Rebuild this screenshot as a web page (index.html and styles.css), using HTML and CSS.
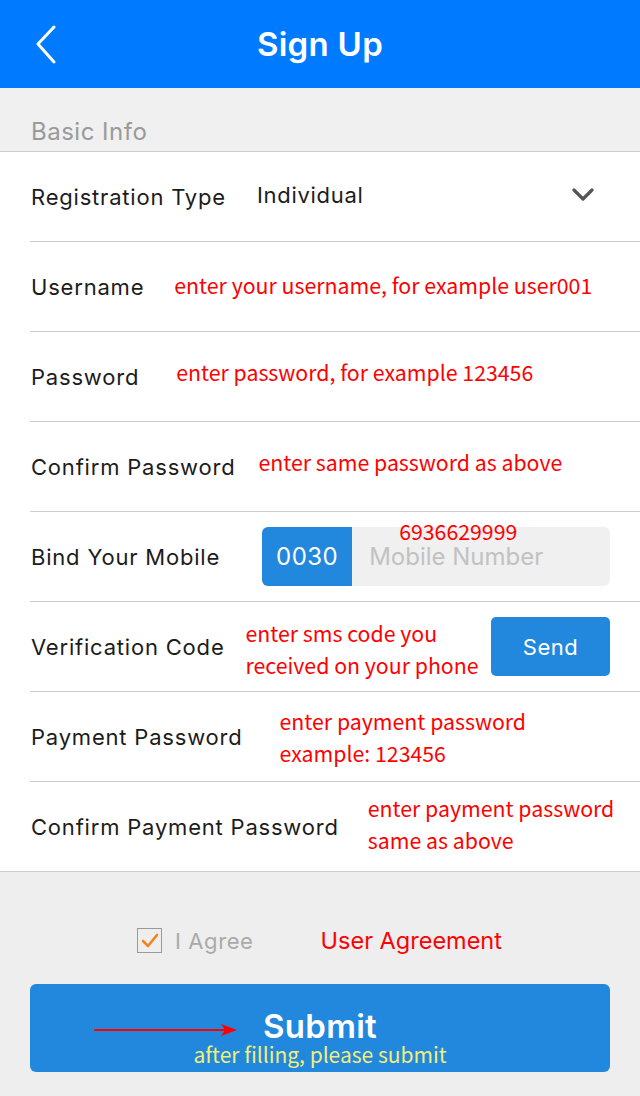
FILE: index.html
```html
<!DOCTYPE html>
<html>
<head>
<meta charset="utf-8">
<link rel="stylesheet" href="styles.css">
</head>
<body>
<header class="topbar">
  <svg class="back" width="30" height="40" viewBox="0 0 30 40"><polyline points="19,2 3,19 19,37" fill="none" stroke="#fff" stroke-width="3" stroke-linecap="round" stroke-linejoin="round"/></svg>
  <h1 class="title">Sign Up</h1>
</header>
<div class="section-title">Basic Info</div>
<div class="form">
  <div class="row">
    <span class="label">Registration Type</span>
    <span class="select">Individual</span>
    <svg class="caret" width="22" height="14" viewBox="0 0 22 14"><polyline points="2,2 11,11 20,2" fill="none" stroke="#555" stroke-width="3.2" stroke-linecap="round" stroke-linejoin="round"/></svg>
  </div>
  <div class="row">
    <span class="label">Username</span>
    <span class="note n-user">enter your username, for example user001</span>
  </div>
  <div class="row">
    <span class="label">Password</span>
    <span class="note n-pass">enter password, for example 123456</span>
  </div>
  <div class="row">
    <span class="label">Confirm Password</span>
    <span class="note n-conf">enter same password as above</span>
  </div>
  <div class="row">
    <span class="label">Bind Your Mobile</span>
    <div class="phone">
      <span class="code">0030</span>
      <span class="placeholder">Mobile Number</span>
      <span class="note phone-note">6936629999</span>
    </div>
  </div>
  <div class="row">
    <span class="label">Verification Code</span>
    <span class="note n-ver">enter sms code you<br>received on your phone</span>
    <button class="send">Send</button>
  </div>
  <div class="row">
    <span class="label">Payment Password</span>
    <span class="note n-pay">enter payment password<br>example: 123456</span>
  </div>
  <div class="row last">
    <span class="label">Confirm Payment Password</span>
    <span class="note n-cpay">enter payment password<br>same as above</span>
  </div>
</div>
<div class="footer">
  <div class="agree">
    <span class="check"><svg width="18" height="16" viewBox="0 0 18 16"><polyline points="2,8 7,13 16,2" fill="none" stroke="#f5821f" stroke-width="2.6" stroke-linecap="round" stroke-linejoin="round"/></svg></span>
    <span class="agree-text">I Agree</span>
    <span class="agreement">User Agreement</span>
  </div>
  <div class="submit">
    <svg class="arrow" width="146" height="14" viewBox="0 0 146 14"><line x1="1" y1="7" x2="132" y2="7" stroke="#f00" stroke-width="2"/><polygon points="128,1 144,7 128,13 132,7" fill="#f00"/></svg>
    <span class="submit-text">Submit</span>
    <span class="submit-note">after filling, please submit</span>
  </div>
</div>
</body>
</html>
```
FILE: styles.css
```css
* { box-sizing: border-box; }
html, body { margin: 0; padding: 0; }
body {
  width: 640px;
  height: 1096px;
  background: #eeeeee;
  font-family: Inter, Roboto, "Liberation Sans", sans-serif;
  overflow: hidden;
}
.topbar {
  position: relative;
  height: 88px;
  background: #007aff;
  display: flex;
  align-items: center;
  justify-content: center;
}
.back {
  position: absolute;
  left: 35px;
  top: 25px;
}
.title {
  margin: 0;
  color: #fff;
  font-size: 33px;
  font-weight: 600;
  letter-spacing: 0.3px;
}
.section-title {
  height: 64px;
  background: #f0f0f0;
  color: #9a9a9a;
  font-size: 24px;
  letter-spacing: 0.5px;
  padding-left: 31px;
  padding-top: 28px;
  line-height: 32px;
  border-bottom: 1px solid #cccccc;
}
.form {
  background: #fff;
  border-bottom: 1px solid #cccccc;
}
.row {
  height: 90px;
  margin-left: 30px;
  padding-right: 30px;
  border-bottom: 1px solid #cccccc;
  display: flex;
  align-items: center;
}
.row.last { border-bottom: none; height: 89px; }
.label {
  font-size: 22px;
  letter-spacing: 0.8px;
  color: #1c1c1c;
  padding-left: 1px;
  white-space: nowrap;
}
.select {
  margin-left: 31px;
  font-size: 22px;
  letter-spacing: 0.7px;
  color: #1c1c1c;
  margin-top: -4px;
  flex: 1;
}
.caret { margin-top: -4px; margin-right: 16px; }
.note {
  font-family: "Noto Sans CJK SC", "Noto Sans", sans-serif;
  color: #ff0000;
  font-size: 21.3px;
  line-height: 32px;
  white-space: nowrap;
}
.n-user { margin-left: 30px; margin-top: -3px; }
.n-pass { margin-left: 37px; margin-top: -9px; }
.n-conf { margin-left: 23px; margin-top: -10px; }
.n-ver { margin-left: 21px; margin-top: 4px; flex: 1; }
.n-pay { margin-left: 37px; }
.n-cpay { margin-left: 29px; margin-top: -6px; }
.phone {
  position: relative;
  margin-left: 42px;
  flex: 1;
  height: 59px;
  border-radius: 6px;
  background: #f0f0f0;
  display: flex;
  align-items: center;
}
.code {
  width: 90px;
  height: 59px;
  background: #2288dd;
  border-radius: 6px 0 0 6px;
  color: #fff;
  font-size: 24px;
  letter-spacing: 0.5px;
  display: flex;
  align-items: center;
  justify-content: center;
}
.placeholder {
  margin-left: 17px;
  font-size: 24px;
  color: #c2c2c2;
}
.phone-note {
  position: absolute;
  left: 137px;
  top: -12px;
}
.send {
  width: 119px;
  height: 59px;
  border: none;
  border-radius: 5px;
  background: #2288dd;
  color: #fff;
  font-family: Inter, Roboto, "Liberation Sans", sans-serif;
  font-size: 22px;
  letter-spacing: 0.5px;
  padding: 0;
}
.footer {
  padding: 56px 30px 0 30px;
}
.agree {
  display: flex;
  align-items: center;
  height: 25px;
  padding-left: 107px;
}
.check {
  width: 25px;
  height: 25px;
  border: 1px solid #999;
  display: flex;
  align-items: center;
  justify-content: center;
}
.agree-text {
  margin-left: 13px;
  color: #aaaaaa;
  font-size: 22px;
  letter-spacing: 0.6px;
}
.agreement {
  margin-left: 67px;
  color: #ff0000;
  font-size: 23.5px;
  letter-spacing: 0;
}
.submit {
  position: relative;
  margin-top: 31px;
  height: 88px;
  border-radius: 6px;
  background: #2288dd;
  display: flex;
  flex-direction: column;
  align-items: center;
  padding-top: 24px;
}
.arrow {
  position: absolute;
  left: 63px;
  top: 39px;
}
.submit-text {
  color: #fff;
  font-size: 33px;
  font-weight: 600;
  letter-spacing: 0.3px;
  line-height: 36px;
}
.submit-note {
  font-family: "Noto Sans CJK SC", "Noto Sans", sans-serif;
  color: #f2ee78;
  font-size: 21px;
  line-height: 24px;
  margin-top: -2px;
}
```
